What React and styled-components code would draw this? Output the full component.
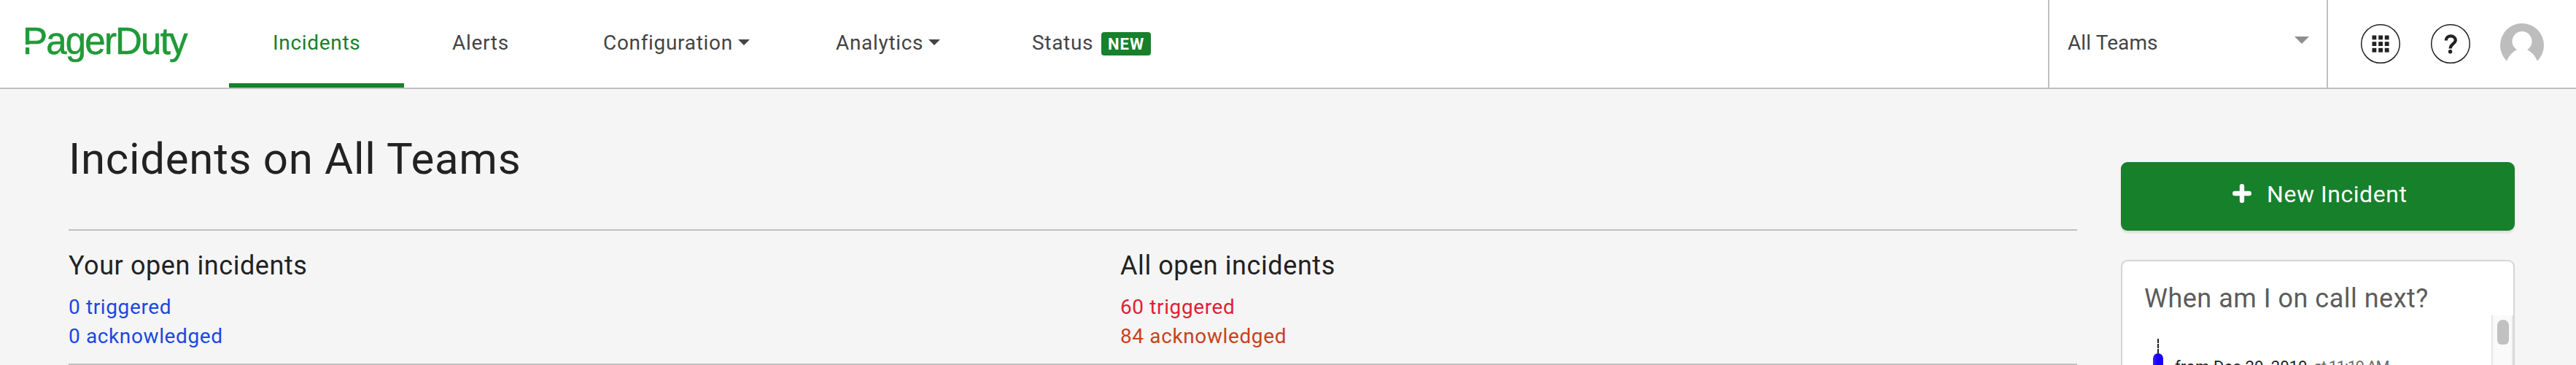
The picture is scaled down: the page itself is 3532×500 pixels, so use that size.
import React from "react";
import styled, { createGlobalStyle } from "styled-components";

const GlobalStyle = createGlobalStyle`
  *, *::before, *::after { box-sizing: border-box; }
  body {
    margin: 0;
    background: #f5f5f5;
    font-family: Roboto, "Liberation Sans", sans-serif;
    letter-spacing: 0.7px;
    color: #222;
    overflow: hidden;
  }
`;

const Page = styled.div`
  width: 3532px;
  height: 500px;
  overflow: hidden;
`;

const Header = styled.header`
  display: flex;
  height: 122px;
  background: #fff;
  border-bottom: 2px solid #c0c0c0;
`;

const Brand = styled.a`
  position: relative;
  flex: none;
  width: 314px;
  padding: 28px 0 0 31px;
  font-family: "Liberation Sans", sans-serif;
  font-size: 51px;
  line-height: 58px;
  letter-spacing: -1.8px;
  color: #1f9a38;
  -webkit-text-stroke: 0.6px #1f9a38;

  &::after {
    content: "";
    position: absolute;
    left: 30px;
    top: 61px;
    width: 13px;
    height: 4px;
    background: #fff;
  }
`;

const Nav = styled.nav`
  display: flex;
  flex: 1;
  gap: 6px;
`;

const NavItem = styled.a`
  display: flex;
  align-items: flex-start;
  width: ${(p) => p.$width}px;
  padding: 43px 0 0 60px;
  font-size: 28px;
  line-height: 32px;
  letter-spacing: 0.68px;
  white-space: nowrap;
  color: ${(p) => (p.$active ? "#17802b" : "#444")};
  border-bottom: 6px solid ${(p) => (p.$active ? "#17802b" : "transparent")};
`;

const Caret = styled.span`
  margin: 11px 0 0 7px;
  border: solid transparent;
  border-width: 8px 8px 0;
  border-top-color: #444;
`;

const Badge = styled.span`
  width: 68px;
  height: 32px;
  margin: 1px 0 0 11px;
  border-radius: 4px;
  background: #17802b;
  color: #fff;
  font-size: 22px;
  font-weight: 700;
  line-height: 33px;
  letter-spacing: 1px;
  text-align: center;
`;

const TeamPicker = styled.div`
  display: flex;
  justify-content: space-between;
  width: 384px;
  padding: 43px 24px 0 25px;
  border: solid #c0c0c0;
  border-width: 0 2px;
  font-size: 28px;
  line-height: 32px;
  letter-spacing: 0.1px;
  color: #444;
`;

const PickerArrow = styled.span`
  margin-top: 7px;
  height: 10px;
  border: solid transparent;
  border-width: 10px 10px 0;
  border-top-color: #8e8e8e;
`;

const Tools = styled.div`
  display: flex;
  align-items: flex-start;
  width: 340px;
  padding: 32px 0 0 44px;
`;

const ToolIcon = styled.svg`
  width: 56px;
  height: 56px;
  margin-right: 40px;
`;

const Avatar = styled.svg`
  width: 60px;
  height: 60px;
`;

const Body = styled.main`
  display: flex;
  align-items: flex-start;
  padding-left: 94px;
`;

const Main = styled.section`
  width: 2754px;
  margin-right: 60px;
`;

const Title = styled.h1`
  height: 192px;
  margin: 0;
  padding-top: 61px;
  font-size: 60px;
  font-weight: 400;
  line-height: 70px;
`;

const Summary = styled.div`
  display: grid;
  grid-template-columns: 1442px 1fr;
  height: 186px;
  padding-top: 26px;
  border: solid #c0c0c0;
  border-width: 2px 0;
`;

const Heading = styled.h2`
  margin: 0 0 15px;
  font-size: 36px;
  font-weight: 400;
  line-height: 44px;
  letter-spacing: 0.58px;
`;

const Count = styled.a`
  display: block;
  font-size: 28px;
  line-height: 40px;
  letter-spacing: 0.62px;
  color: ${(p) => p.$color};
`;

const Side = styled.aside`
  width: 540px;
  padding-top: 100px;
`;

const NewButton = styled.button`
  display: flex;
  align-items: flex-start;
  width: 540px;
  height: 94px;
  padding: 26px 0 0 153px;
  border: 0;
  border-radius: 9px;
  background: #17802b;
  box-shadow: 0 3px 3px rgba(0, 0, 0, 0.1);
  color: #fff;
  font: 32px/36px Roboto, sans-serif;
  letter-spacing: 0.55px;

  svg {
    width: 26px;
    height: 26px;
    margin: 4px 21px 0 0;
  }
`;

const Card = styled.section`
  height: 200px;
  margin-top: 40px;
  border: 2px solid #d5d5d5;
  border-radius: 9px;
  background: #fff;
`;

const CardTitle = styled.h3`
  height: 74px;
  margin: 0;
  padding: 29px 0 0 30px;
  font-size: 36px;
  font-weight: 400;
  line-height: 44px;
  letter-spacing: 0.5px;
  color: #5c5c5c;
`;

const Schedule = styled.div`
  display: flex;
  height: 120px;
`;

const Timeline = styled.div`
  width: 14px;
  margin: 32px 16px 0 42px;
`;

const Dashes = styled.div`
  width: 2px;
  height: 20px;
  margin: 0 auto;
  background: repeating-linear-gradient(#222 0 6px, transparent 6px 7px);
`;

const Shift = styled.div`
  height: 60px;
  border-radius: 7px 7px 0 0;
  background: linear-gradient(90deg, #3a24ff, #1a00ff 40%, #1a00ff);
`;

const ShiftText = styled.div`
  flex: 1;
  padding-top: 56px;
  font-size: 22px;
  line-height: 30px;
  letter-spacing: 0.15px;
  white-space: nowrap;
  color: #222;
`;

const Time = styled.span`
  margin-left: 3px;
  letter-spacing: -1.4px;
  color: #6d6d6d;
`;

const Scrollbar = styled.div`
  width: 30px;
  padding: 6px 5px 0 6px;
  border: solid #e6e6e6;
  border-width: 0 2px;
  background: #fafafa;
`;

const Thumb = styled.div`
  width: 16px;
  height: 34px;
  border-radius: 8px 8px 6px 6px;
  background: #c1c1c1;
`;

function GridIcon() {
  return (
    <ToolIcon viewBox="0 0 56 56">
      <circle cx="28" cy="28" r="26.3" fill="none" stroke="#222" strokeWidth="1.5" />
      {[16.5, 25.2, 33.8].map((y) =>
        [16.5, 25.2, 33.8].map((x) => (
          <rect key={`${x}-${y}`} x={x} y={y} width="5.8" height="5.8" fill="#222" />
        ))
      )}
    </ToolIcon>
  );
}

function HelpIcon() {
  return (
    <ToolIcon viewBox="0 0 56 56">
      <circle cx="28" cy="28" r="26.3" fill="none" stroke="#222" strokeWidth="1.5" />
      <path d="M21.8 23.6 C21.8 15.3 34.8 15.6 34.8 23 C34.8 27.8 27.6 28 27.6 34.6" fill="none" stroke="#222" strokeWidth="4.2" />
      <circle cx="27.6" cy="38.8" r="2.7" fill="#222" />
    </ToolIcon>
  );
}

export default function App() {
  return (
    <Page>
      <GlobalStyle />
      <Header>
        <Brand>PagerDuty</Brand>
        <Nav>
          <NavItem $active $width={240}>Incidents</NavItem>
          <NavItem $width={201}>Alerts</NavItem>
          <NavItem $width={313}>Configuration<Caret /></NavItem>
          <NavItem $width={263}>Analytics<Caret /></NavItem>
          <NavItem $width={260}>Status<Badge>NEW</Badge></NavItem>
        </Nav>
        <TeamPicker>All Teams<PickerArrow /></TeamPicker>
        <Tools>
          <GridIcon />
          <HelpIcon />
          <Avatar viewBox="0 0 60 60">
            <circle cx="30" cy="30" r="30" fill="#bdbdbd" />
            <circle cx="30" cy="24.5" r="13.5" fill="#fff" />
            <path d="M0 60 V51 H9.5 C12 44 17 39 23 36 H37 C43 39 48 44 50.5 51 H60 V60Z" fill="#fff" />
          </Avatar>
        </Tools>
      </Header>
      <Body>
        <Main>
          <Title>Incidents on All Teams</Title>
          <Summary>
            <div>
              <Heading>Your open incidents</Heading>
              <Count $color="#1a47e0">0 triggered</Count>
              <Count $color="#1a47e0">0 acknowledged</Count>
            </div>
            <div>
              <Heading>All open incidents</Heading>
              <Count $color="#e01e37">60 triggered</Count>
              <Count $color="#c8421c">84 acknowledged</Count>
            </div>
          </Summary>
        </Main>
        <Side>
          <NewButton>
            <svg viewBox="0 0 26 26">
              <path d="M13 3.2V22.8M3.2 13H22.8" stroke="#fff" strokeWidth="6.4" strokeLinecap="round" />
            </svg>
            New Incident
          </NewButton>
          <Card>
            <CardTitle>When am I on call next?</CardTitle>
            <Schedule>
              <Timeline>
                <Dashes />
                <Shift />
              </Timeline>
              <ShiftText>
                from Dec 29, 2019 <Time>at 11:19 AM</Time>
              </ShiftText>
              <Scrollbar>
                <Thumb />
              </Scrollbar>
            </Schedule>
          </Card>
        </Side>
      </Body>
    </Page>
  );
}
